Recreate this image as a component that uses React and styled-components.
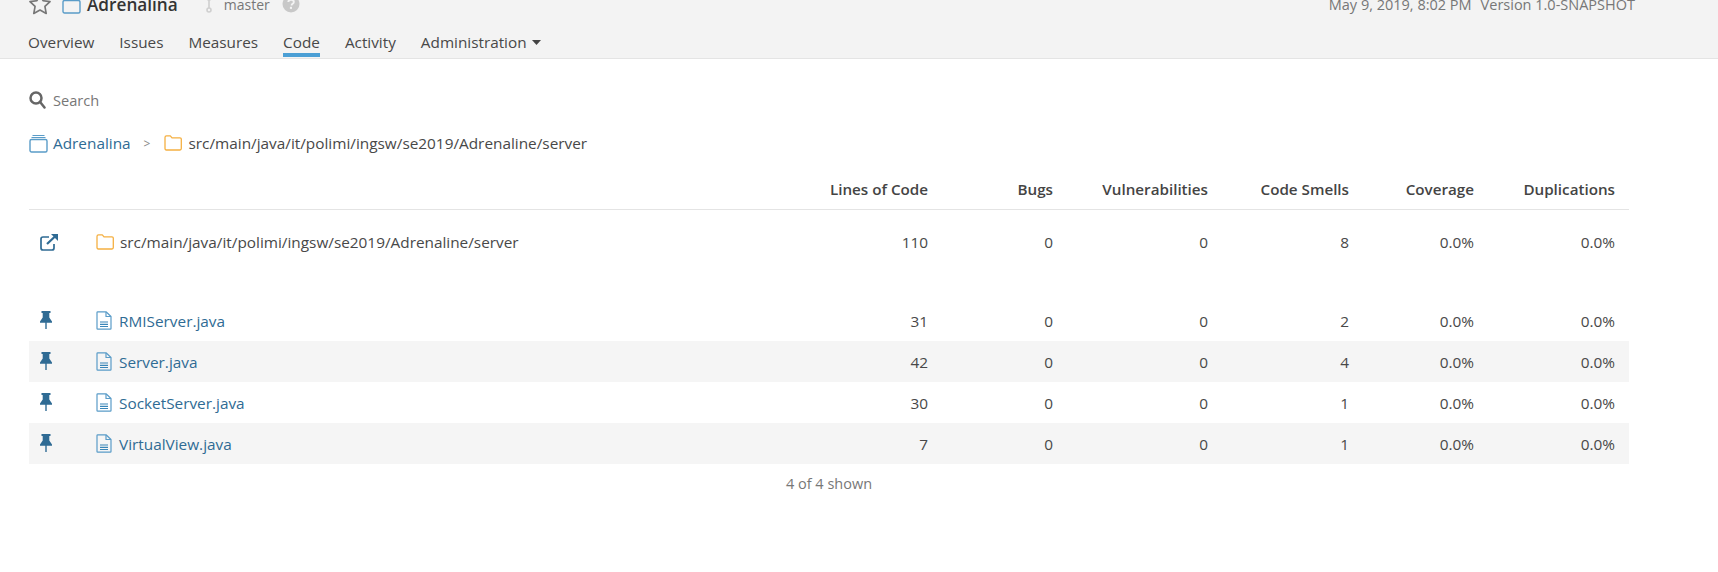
import React from "react";
import styled, { createGlobalStyle } from "styled-components";

const Global = createGlobalStyle`
  html, body { margin: 0; padding: 0; background: #fff; }
  body { font-family: "Open Sans", "Noto Sans", sans-serif; font-size: 15.35px; color: #484848; overflow: hidden; }
`;

const Page = styled.div`
  width: 1718px;
  height: 572px;
  overflow: hidden;
`;

const Header = styled.header`
  height: 58px;
  background: #f3f3f3;
  border-bottom: 1px solid #e4e4e4;
  padding: 0 83px 0 28px;
  position: relative;
  overflow: hidden;
`;

const TitleRow = styled.div`
  height: 24px;
  margin-top: -8px;
  display: flex;
  align-items: center;
`;

const Title = styled.span`
  font-size: 17.2px;
  font-weight: 600;
  color: #333;
  margin-left: 6px;
`;

const Branch = styled.span`
  font-size: 14px;
  color: #777;
  margin-left: 11px;
`;

const Meta = styled.div`
  margin-left: auto;
  display: flex;
  gap: 9px;
  font-size: 14.5px;
  color: #777;
`;

const Tabs = styled.nav`
  display: flex;
  gap: 25px;
  margin-top: 16px;
`;

const Tab = styled.span`
  position: relative;
  height: 22px;
  line-height: 20px;
  font-size: 15.3px;
  color: #484848;
  display: inline-flex;
  align-items: flex-start;
  gap: 5px;
  ${(p) =>
    p.$active &&
    `&::after {
      content: "";
      position: absolute;
      left: 0;
      right: 0;
      bottom: -3px;
      height: 4px;
      background: #4b9fd5;
    }`}
`;

const Main = styled.main`
  padding: 31px 89px 0 29px;
`;

const Search = styled.div`
  display: flex;
  align-items: center;
  gap: 7px;
  height: 20px;
  color: #777;
  font-size: 14.6px;
`;

const Crumbs = styled.div`
  display: flex;
  align-items: center;
  height: 24px;
  margin-top: 21px;
`;

const CrumbLink = styled.span`
  color: #2f6b94;
  margin-left: 5px;
`;

const Separator = styled.span`
  color: #888;
  font-size: 12px;
  margin: 0 14px 0 13px;
`;

const CrumbPath = styled.span`
  color: #484848;
  margin-left: 6px;
`;

const Row = styled.div`
  display: grid;
  grid-template-columns: 67px 712px 120px 125px 155px 141px 125px 141px;
  padding-right: 14px;
  align-items: center;
  height: 41px;
  background: ${(p) => (p.$striped ? "#f5f5f5" : "transparent")};
`;

const HeadRow = styled(Row)`
  margin-top: 13px;
  height: 41px;
  border-bottom: 1px solid #e4e4e4;
  color: #444;
`;

const BaseRow = styled(Row)`
  height: 64px;
  margin-bottom: 26px;
`;

const Num = styled.span`
  text-align: right;
`;

const HeadCell = styled.span`
  text-align: right;
  white-space: nowrap;
  font-weight: 600;
  font-size: 15.2px;
`;

const IconCell = styled.span`
  display: flex;
  padding-left: ${(p) => p.$pad || 11}px;
`;

const NameCell = styled.span`
  display: flex;
  align-items: center;
  color: ${(p) => (p.$link ? "#2f6b94" : "#484848")};
`;

const FileName = styled.span`
  margin-left: ${(p) => p.$gap || 6}px;
  white-space: nowrap;
`;

const Footer = styled.div`
  text-align: center;
  color: #777;
  font-size: 14.5px;
  margin-top: 10px;
  width: 1600px;
`;

const Spacer = styled.span`
  width: ${(p) => p.$w}px;
`;

const Star = () => (
  <svg width="24" height="24" viewBox="0 0 22 22" fill="none" stroke="#777" strokeWidth="1.5" strokeLinejoin="round">
    <path d="M11 2l2.8 6 6.4.8-4.7 4.4 1.2 6.500L11 16.500l-5.700 3.200 1.200-6.500L1.800 8.800 8.200 8z" />
  </svg>
);

const Project = ({ stack }) => (
  <svg width="19" height="19" viewBox="0 0 19 19" fill="none" stroke="#5a9cc8" strokeWidth="1.400">
    {stack && <path d="M3.500 1.500h12M2.500 3.500h14" strokeWidth="1.100" />}
    <rect x="1" y="5.500" width="17" height="12.500" rx="1.500" />
  </svg>
);

const BranchIcon = () => (
  <svg width="8" height="18" viewBox="0 0 8 18" fill="none" stroke="#cfcfcf" strokeWidth="1.600" style={{ marginLeft: 27 }}>
    <circle cx="4" cy="3" r="2" />
    <circle cx="4" cy="15" r="2" />
    <path d="M4 5v8" />
  </svg>
);

const Help = () => (
  <svg width="18" height="18" viewBox="0 0 18 18" style={{ marginLeft: 12 }}>
    <circle cx="9" cy="9" r="8.500" fill="#c8c8c8" />
    <path d="M6.300 7c.2-1.600 1.300-2.300 2.800-2.300 1.600 0 2.700.9 2.700 2.200 0 1.100-.7 1.600-1.500 2.200-.5.4-.7.7-.7 1.300" fill="none" stroke="#f3f3f3" strokeWidth="1.900" />
    <rect x="7.900" y="11.800" width="2.100" height="2.100" fill="#f3f3f3" />
  </svg>
);

const Caret = () => (
  <svg width="9" height="5" viewBox="0 0 9 5" style={{ marginTop: 8 }}>
    <path d="M0 0h9L4.500 5z" fill="#444" />
  </svg>
);

const SearchIcon = () => (
  <svg width="17" height="18" viewBox="0 0 17 18" fill="none" stroke="#666" strokeWidth="2.500" strokeLinecap="round">
    <circle cx="7" cy="7" r="5.500" />
    <path d="M11.500 11.500l4 5" />
  </svg>
);

const Folder = () => (
  <svg width="18" height="16" viewBox="0 0 18 16" fill="none" stroke="#f5b042" strokeWidth="1.300" strokeLinejoin="round">
    <path d="M1 2.500C1 1.400 1.500.8 2.500.8h3.800l1.700 2h8c.8 0 1.300.5 1.300 1.300v9.500c0 .9-.5 1.400-1.300 1.400H2.300c-.8 0-1.300-.5-1.300-1.400z" />
  </svg>
);

const ExternalLink = () => (
  <svg width="19" height="18" viewBox="0 0 19 18" fill="none" stroke="#2f6b94" strokeWidth="1.700">
    <path d="M9 4H3C1.800 4 1 4.800 1 6v9c0 1.200.8 2 2 2h9c1.200 0 2-.8 2-2v-4" />
    <path d="M7 11L15.500 3" strokeWidth="2.200" />
    <path d="M11 1h7v7z" fill="#2f6b94" stroke="none" />
  </svg>
);

const Pin = () => (
  <svg width="12" height="18" viewBox="0 0 12 18" fill="#2f6b94" style={{ marginTop: -1 }}>
    <path d="M1.500 0h9v2H9.300v4.500L12 10.500v1.300H0v-1.300l2.700-4V2H1.500z" />
    <rect x="5.300" y="11" width="1.400" height="7" />
  </svg>
);

const FileIcon = () => (
  <svg width="16" height="19" viewBox="0 0 16 19" fill="none" stroke="#5a9cc8" strokeWidth="1.200" strokeLinejoin="round">
    <path d="M1 1.500c0-.4.2-.7.7-.7h8.300L15 5.500v12c0 .4-.2.700-.7.700H1.700c-.5 0-.7-.3-.7-.7z" />
    <path d="M10 1v4.500h5" />
    <path d="M4 11h8M4 13.300h8M4 15.500h8" stroke="#3a86b8" />
  </svg>
);

const columns = ["Lines of Code", "Bugs", "Vulnerabilities", "Code Smells", "Coverage", "Duplications"];
const tabs = ["Overview", "Issues", "Measures", "Code", "Activity"];
const path = "src/main/java/it/polimi/ingsw/se2019/Adrenaline/server";
const files = [
  { name: "RMIServer.java", loc: 31, smells: 2 },
  { name: "Server.java", loc: 42, smells: 4 },
  { name: "SocketServer.java", loc: 30, smells: 1 },
  { name: "VirtualView.java", loc: 7, smells: 1 },
];

const Metrics = ({ loc, smells }) => (
  <>
    <Num>{loc}</Num>
    <Num>0</Num>
    <Num>0</Num>
    <Num>{smells}</Num>
    <Num>0.0%</Num>
    <Num>0.0%</Num>
  </>
);

export default function App() {
  return (
    <Page>
      <Global />
      <Header>
        <TitleRow>
          <Star />
          <Spacer $w={10} />
          <Project />
          <Title>Adrenalina</Title>
          <BranchIcon />
          <Branch>master</Branch>
          <Help />
          <Meta>
            <span>May 9, 2019, 8:02 PM</span>
            <span>Version 1.0-SNAPSHOT</span>
          </Meta>
        </TitleRow>
        <Tabs>
          {tabs.map((t) => (
            <Tab key={t} $active={t === "Code"}>
              {t}
            </Tab>
          ))}
          <Tab>
            Administration
            <Caret />
          </Tab>
        </Tabs>
      </Header>
      <Main>
        <Search>
          <SearchIcon />
          Search
        </Search>
        <Crumbs>
          <Project stack />
          <CrumbLink>Adrenalina</CrumbLink>
          <Separator>&gt;</Separator>
          <Folder />
          <CrumbPath>{path}</CrumbPath>
        </Crumbs>
        <HeadRow>
          <span />
          <span />
          {columns.map((c) => (
            <HeadCell key={c}>{c}</HeadCell>
          ))}
        </HeadRow>
        <BaseRow>
          <IconCell>
            <ExternalLink />
          </IconCell>
          <NameCell>
            <Folder />
            <FileName>{path}</FileName>
          </NameCell>
          <Metrics loc={110} smells={8} />
        </BaseRow>
        {files.map((f, i) => (
          <Row key={f.name} $striped={i % 2 === 1}>
            <IconCell>
              <Pin />
            </IconCell>
            <NameCell $link>
              <FileIcon />
              <FileName $gap={7}>{f.name}</FileName>
            </NameCell>
            <Metrics loc={f.loc} smells={f.smells} />
          </Row>
        ))}
        <Footer>4 of 4 shown</Footer>
      </Main>
    </Page>
  );
}
